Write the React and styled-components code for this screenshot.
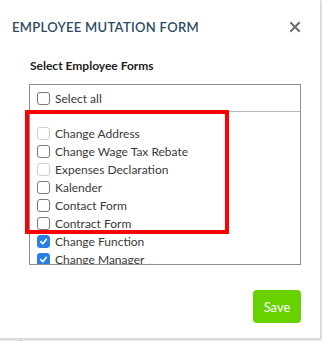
import React from "react";
import styled, { createGlobalStyle } from "styled-components";

const GlobalStyle = createGlobalStyle`
  html, body {
    margin: 0;
    padding: 0;
    background: #e8eaee;
    font-family: "Lato", "Liberation Sans", sans-serif;
    overflow: hidden;
  }
`;

const Modal = styled.div`
  width: 320px;
  height: 338px;
  background: #ffffff;
  box-shadow: 1px 1px 2px rgba(0, 0, 0, 0.12);
  display: flex;
  flex-direction: column;
  box-sizing: border-box;
`;

const Header = styled.div`
  display: flex;
  align-items: center;
  justify-content: space-between;
  height: 54px;
  padding: 0 19px 0 12px;
`;

const Title = styled.h2`
  margin: 0;
  font-size: 13px;
  font-weight: 600;
  letter-spacing: 0.3px;
  color: #2c4a64;
`;

const Close = styled.button`
  border: 0;
  background: none;
  padding: 0;
  width: 12px;
  height: 12px;
  display: flex;
  cursor: pointer;
`;

const Body = styled.div`
  padding: 4px 19px 0 29px;
  display: flex;
  flex-direction: column;
`;

const Label = styled.div`
  font-size: 12px;
  font-weight: 700;
  color: #222;
  padding-left: 1px;
  line-height: 16px;
`;

const ListBox = styled.div`
  position: relative;
  margin-top: 10px;
  border: 1px solid #8f8f8f;
  height: 181px;
  box-sizing: border-box;
  display: flex;
  flex-direction: column;
`;

const AllRow = styled.div`
  height: 26px;
  border-bottom: 1px solid #b9b9b9;
  display: flex;
  align-items: center;
  padding-left: 7px;
  flex-shrink: 0;
`;

const Items = styled.div`
  flex: 1;
  overflow: hidden;
  padding-top: 12px;
  padding-left: 7px;
`;

const Row = styled.label`
  display: flex;
  align-items: center;
  height: 18px;
  font-size: 12px;
  color: #3a3a3a;
  gap: 5px;
`;

const Box = styled.span`
  width: 13px;
  height: 13px;
  box-sizing: border-box;
  border-radius: 3px;
  display: flex;
  align-items: center;
  justify-content: center;
  flex-shrink: 0;
  background: ${({ checked }) => (checked ? "#2a7ee8" : "#fff")};
  border: 1px solid
    ${({ checked, faded }) => (checked ? "#2a7ee8" : faded ? "#cfcfcf" : "#7a7a7a")};
`;

const Highlight = styled.div`
  position: absolute;
  left: -5px;
  top: 25px;
  width: 204px;
  height: 124px;
  box-sizing: border-box;
  border: 4px solid #ff0000;
  pointer-events: none;
`;

const Footer = styled.div`
  display: flex;
  justify-content: flex-end;
  padding: 25px 0 0;
`;

const SaveButton = styled.button`
  width: 48px;
  height: 33px;
  border: 0;
  border-radius: 4px;
  background: #68d100;
  color: #fff;
  font-family: inherit;
  font-size: 13px;
`;

const Behind = styled.div`
  margin-left: -23px;
  font-size: 12px;
  color: #9a9a9a;
  line-height: 14px;
`;

const Check = ({ checked, faded }) => (
  <Box checked={checked} faded={faded}>
    {checked && (
      <svg width="9" height="9" viewBox="0 0 10 10">
        <path d="M2 5.2 L4.2 7.4 L8.2 2.6" fill="none" stroke="#fff" strokeWidth="1.8" strokeLinecap="round" strokeLinejoin="round" />
      </svg>
    )}
  </Box>
);

const forms = [
  { name: "Change Address", faded: true },
  { name: "Change Wage Tax Rebate" },
  { name: "Expenses Declaration", faded: true },
  { name: "Kalender" },
  { name: "Contact Form" },
  { name: "Contract Form" },
  { name: "Change Function", checked: true },
  { name: "Change Manager", checked: true },
];

export default function App() {
  return (
    <>
      <GlobalStyle />
      <Modal>
        <Header>
          <Title>EMPLOYEE MUTATION FORM</Title>
          <Close aria-label="close">
            <svg width="12" height="12" viewBox="0 0 12 12">
              <path d="M2 2 L10 10 M10 2 L2 10" stroke="#6e6e6e" strokeWidth="2" strokeLinecap="square" />
            </svg>
          </Close>
        </Header>
        <Body>
          <Label>Select Employee Forms</Label>
          <ListBox>
            <AllRow>
              <Row>
                <Check />
                Select all
              </Row>
            </AllRow>
            <Items>
              {forms.map((f) => (
                <Row key={f.name}>
                  <Check checked={f.checked} faded={f.faded} />
                  {f.name}
                </Row>
              ))}
            </Items>
            <Highlight />
          </ListBox>
          <Footer>
            <SaveButton>Save</SaveButton>
          </Footer>
        </Body>
      </Modal>
      <Behind>Personal Info</Behind>
    </>
  );
}
